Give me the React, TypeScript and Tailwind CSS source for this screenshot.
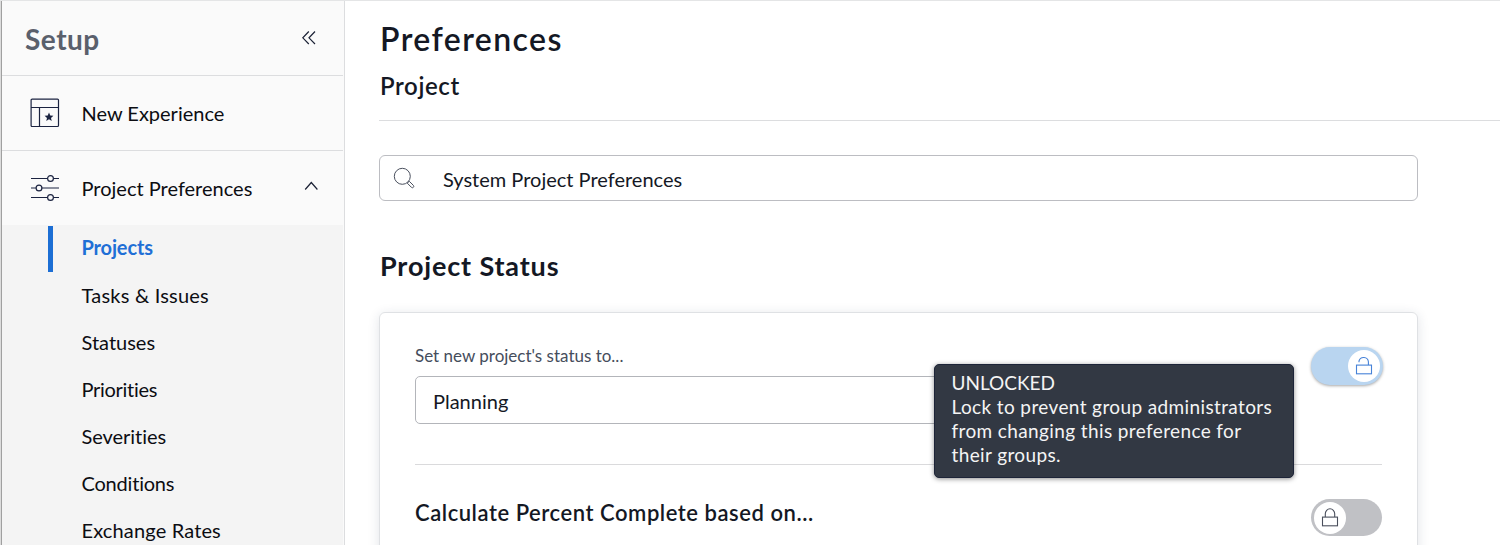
import type { ReactNode } from "react";

function CollapseIcon() {
  return (
    <svg width="14" height="14" viewBox="0 0 14 14" fill="none" stroke="#1b2135" strokeWidth="1.2">
      <path d="M6.8 0.5 0.8 6.8 6.8 13M13 0.5 7 6.8 13 13" />
    </svg>
  );
}

function LayoutStarIcon() {
  return (
    <svg width="30" height="30" viewBox="0 0 30 30" fill="none" stroke="#1b2340" strokeWidth="1.2">
      <rect x="1.1" y="1.1" width="27.4" height="27.4" rx="1" />
      <path d="M1 9.5h27.5M9.5 9.5v19" />
      <path
        d="M19 14.6l1.25 3 3.15.25-2.4 2.05.75 3.1-2.75-1.65-2.75 1.65.75-3.1-2.4-2.05 3.15-.25z"
        fill="#1b2340"
        stroke="none"
      />
    </svg>
  );
}

function SlidersIcon() {
  return (
    <svg width="30" height="28" viewBox="0 0 30 28" fill="none" stroke="#1b2340" strokeWidth="1.2">
      <path d="M1 4.5h16.5M23.5 4.5H29M1 14h5M12 14h17M1 23.5h16.5M23.5 23.5H29" />
      <circle cx="20.5" cy="4.5" r="2.9" />
      <circle cx="9" cy="14" r="2.9" />
      <circle cx="20.5" cy="23.5" r="2.9" />
    </svg>
  );
}

function ChevronUpIcon() {
  return (
    <svg className="mb-1" width="14" height="10" viewBox="0 0 14 10" fill="none" stroke="#1b2135" strokeWidth="1.2">
      <path d="M1.2 8.5 7.3 1.5 13.4 8.5" />
    </svg>
  );
}

function SearchIcon() {
  return (
    <svg width="22" height="22" viewBox="0 0 22 22" fill="none" stroke="#4a505e" strokeWidth="1">
      <circle cx="9.3" cy="9.3" r="8" />
      <path d="M14.3 16.2l4.1 4.1a1.36 1.36 0 0 0 1.95-1.95l-4.1-4.1" />
      <path d="M14.3 16.2l1.95-1.95" />
    </svg>
  );
}

function LockIcon({ open }: { open: boolean }) {
  return (
    <svg
      width="18"
      height="20"
      viewBox="0 0 18 20"
      fill="none"
      stroke={open ? "#4682d8" : "#4a4f5c"}
      strokeWidth="1.1"
    >
      <rect x="1.5" y="9.1" width="15" height="8.7" />
      {open ? (
        <path d="M4 6.2V5A4.8 4.8 0 0 1 13.4 5.8V9.1" />
      ) : (
        <path d="M4.3 9.1V5.8a4.7 5 0 0 1 9.4 0V9.1" />
      )}
    </svg>
  );
}

function Toggle({ unlocked }: { unlocked: boolean }) {
  return (
    <div
      className={
        unlocked
          ? "-mr-px mt-px flex h-[38px] w-[72px] shrink-0 items-center justify-end rounded-full bg-[#b9d5f0] px-[3px] shadow-[0_1px_3px_rgba(0,0,0,0.35)]"
          : "flex h-[37px] w-[71px] shrink-0 items-center justify-start rounded-full bg-[#c0c1c5] px-[3px]"
      }
    >
      <div className="flex size-8 items-center justify-center rounded-full bg-white">
        <LockIcon open={unlocked} />
      </div>
    </div>
  );
}

function MenuSection({ icon, label, trailing }: { icon: ReactNode; label: string; trailing?: ReactNode }) {
  return (
    <div className="flex h-[75px] shrink-0 items-center border-t border-[#dcdddf] pl-7 pr-[25px]">
      <span className="flex w-[51.5px] items-center">{icon}</span>
      <span className="flex-1 whitespace-nowrap pb-px text-[20px] leading-6">{label}</span>
      {trailing}
    </div>
  );
}

const subItems = [
  { label: "Tasks & Issues", tracking: "tracking-[0.22px]" },
  { label: "Statuses", tracking: "tracking-normal" },
  { label: "Priorities", tracking: "tracking-[-0.3px]" },
  { label: "Severities", tracking: "tracking-[-0.05px]" },
  { label: "Conditions", tracking: "tracking-[-0.2px]" },
  { label: "Exchange Rates", tracking: "tracking-[0.15px]" },
];

function Sidebar() {
  return (
    <aside className="flex w-[345px] shrink-0 flex-col border-r border-[#dcdddf] bg-[#fafafa] text-[#0c0d12]">
      <div className="flex min-h-0 flex-1 border-l border-[#dcdcdc]">
        <div className="flex min-w-0 flex-1 flex-col border-l border-[#a0a0a0] pr-px">
          <div className="flex h-[74px] shrink-0 items-center justify-between pl-[23px] pr-[27px]">
            <h2 className="pt-0.5 text-[28px] font-bold leading-8 tracking-[0.5px] text-[#5a606c]">Setup</h2>
            <CollapseIcon />
          </div>
          <MenuSection icon={<LayoutStarIcon />} label="New Experience" />
          <MenuSection icon={<SlidersIcon />} label="Project Preferences" trailing={<ChevronUpIcon />} />
          <nav className="min-h-0 flex-1 bg-[#f4f4f4] pt-px">
            <div className="mb-px flex h-[46px] items-center">
              <span className="ml-[46px] h-full w-[5px] bg-[#1c6ed4]" />
              <span className="pb-1 pl-[28.5px] text-[20px] font-bold leading-6 tracking-[-0.15px] text-[#1f6fd6]">
                Projects
              </span>
            </div>
            {subItems.map((item) => (
              <div
                key={item.label}
                className={`flex h-[47px] items-center pb-[3px] pl-[79.5px] text-[20px] leading-6 ${item.tracking}`}
              >
                {item.label}
              </div>
            ))}
          </nav>
        </div>
      </div>
    </aside>
  );
}

function Tooltip() {
  return (
    <div className="absolute left-[554px] top-[51px] h-[114px] w-[360px] rounded-[5px] border border-[#1d2438] bg-[#323843] px-[16.5px] pt-1.5 text-[19px] leading-6 text-[#f4f4f4] shadow-[0_1px_5px_rgba(0,0,0,0.45)]">
      <div>UNLOCKED</div>
      <div className="whitespace-nowrap tracking-[0.38px]">
        Lock to prevent group administrators
        <br />
        from changing this preference for
        <br />
        their groups.
      </div>
    </div>
  );
}

export default function App() {
  return (
    <div className="flex h-[545px] overflow-hidden border-t border-[#e4e5e6] bg-white font-['Lato','Open_Sans',sans-serif] text-[#141824] [font-variant-ligatures:none]">
      <Sidebar />
      <main className="min-w-0 flex-1 pl-[34px]">
        <header className="h-[120px] border-b border-[#dcdddf] pl-px pt-[18px]">
          <h1 className="text-[32px] font-semibold leading-10 tracking-[1.4px]">Preferences</h1>
          <h2 className="pt-[11px] text-[24px] font-semibold leading-8 tracking-[0.6px]">Project</h2>
        </header>

        <div className="mt-[34px] flex h-[46px] w-[1039px] items-center rounded-md border-[1.5px] border-[#bcbdc2] pl-[13px]">
          <SearchIcon />
          <span className="pl-7 pt-0.5 text-[20px] leading-6">System Project Preferences</span>
        </div>

        <h3 className="mt-[47px] pl-px text-[27px] font-bold leading-9 tracking-[0.85px]">Project Status</h3>

        <section className="relative mt-7 h-[260px] w-[1039px] rounded-md border border-[#dfe1e4] px-[35px] pt-[33px] shadow-[0_2px_12px_rgba(30,50,80,0.13)]">
          <div className="flex h-[119px] items-start justify-between border-b border-[#dadadc]">
            <div className="w-[800px]">
              <label className="block text-[17px] leading-5 text-[#454d5c]">Set new project's status to...</label>
              <div className="mt-2.5 flex h-12 items-center rounded-[5px] border border-[#b3b5ba] pl-[17px] pt-0.5 text-[20px]">
                Planning
              </div>
            </div>
            <Toggle unlocked />
          </div>
          <div className="flex items-start justify-between pt-[34px]">
            <span className="text-[22px] font-semibold leading-7 tracking-[0.54px]">
              Calculate Percent Complete based on...
            </span>
            <Toggle unlocked={false} />
          </div>
          <Tooltip />
        </section>
      </main>
    </div>
  );
}
